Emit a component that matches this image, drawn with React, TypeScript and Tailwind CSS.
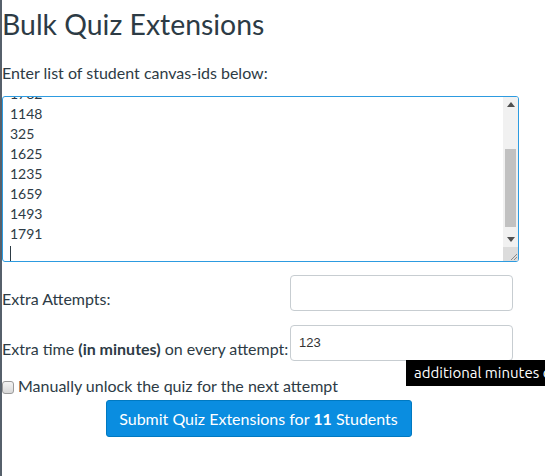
import React from 'react';

const ids = ['1782', '1148', '325', '1625', '1235', '1659', '1493', '1791'];

const Arrow: React.FC<{ down?: boolean }> = ({ down }) => (
  <svg width="8" height="5" viewBox="0 0 8 5" className="block">
    {down ? <polygon points="0,0 8,0 4,5" fill="#505050" /> : <polygon points="0,5 8,5 4,0" fill="#505050" />}
  </svg>
);

const App: React.FC = () => {
  return (
    <div className="relative w-[545px] h-[476px] overflow-hidden bg-white border-l-2 border-[#56606b] font-['Lato',_'Open_Sans',_sans-serif] text-[#2d3b45]">
      <div className="w-[513px]">
        <h1 className="text-[28.4px] leading-[36px] pt-[6px] font-normal">Bulk Quiz Extensions</h1>
        <p className="text-[16px] leading-[20px] mt-[21px]">Enter list of student canvas-ids below:</p>

        {/* textarea, scrolled to the end */}
        <div className="mt-[13px] w-[517px] h-[166px] border border-[#2d9be0] rounded-[3px] flex overflow-hidden">
          <div className="flex-1 overflow-hidden pl-[7px]">
            <div className="mt-[-13px] text-[14px] leading-[20px]">
              {ids.map((id) => (
                <div key={id}>{id}</div>
              ))}
              <div className="h-[20px] flex items-center">
                <div className="w-px h-[18px] bg-[#2d3b45] mt-[2px]" />
              </div>
            </div>
          </div>
          <div className="w-[15px] bg-[#f1f1f1] flex flex-col">
            <div className="h-[15px] flex items-center justify-center">
              <Arrow />
            </div>
            <div className="flex-1 px-[2px]">
              <div className="mt-[37px] h-[78px] bg-[#c1c1c1]" />
            </div>
            <div className="h-[15px] flex items-center justify-center">
              <Arrow down />
            </div>
            <div className="h-[14px] bg-[#dcdcdc] flex items-end justify-end">
              <svg width="9" height="9" viewBox="0 0 9 9" className="block">
                <line x1="8" y1="2" x2="2" y2="8" stroke="#8a8a8a" strokeWidth="1" />
                <line x1="8" y1="5" x2="5" y2="8" stroke="#8a8a8a" strokeWidth="1" />
              </svg>
            </div>
          </div>
        </div>

        <div className="mt-[13px] grid grid-cols-[288px_223px] gap-y-[14px] text-[16px] leading-[20px]">
          <label className="pt-[14px]">Extra Attempts:</label>
          <div className="h-[36px] border border-[#c7cdd1] rounded-[4px] bg-white" />
          <label className="pt-[14px] whitespace-nowrap">
            Extra time <b>(in minutes)</b> on every attempt:
          </label>
          <div className="h-[36px] border border-[#c7cdd1] rounded-[4px] bg-white flex items-center pl-[8px] font-['Liberation_Sans',_Arial,_sans-serif] text-[13px] text-[#333]">
            123
          </div>
        </div>

        <div className="mt-[15px] flex items-center gap-[4px] text-[16px] leading-[20px]">
          <div className="w-[12px] h-[13px] mt-[2px] border border-[#9a9a9a] rounded-[3px] bg-gradient-to-b from-[#f4f4f4] to-[#d8d8d8]" />
          <span>Manually unlock the quiz for the next attempt</span>
        </div>

        <div className="mt-[4px] flex justify-center">
          <button className="w-[306px] h-[37px] rounded-[3px] bg-[#0a8de0] border border-[#0079c1] text-white text-[16px] leading-[20px]">
            Submit Quiz Extensions for <b>11</b> Students
          </button>
        </div>
      </div>

      <div className="absolute left-[404px] top-[360px] h-[26px] w-[160px] bg-black text-white text-[15px] leading-[26px] pl-[8px] whitespace-nowrap font-['Ubuntu',_'Open_Sans',_sans-serif]">
        additional minutes on every attempt
      </div>
    </div>
  );
};

export default App;
